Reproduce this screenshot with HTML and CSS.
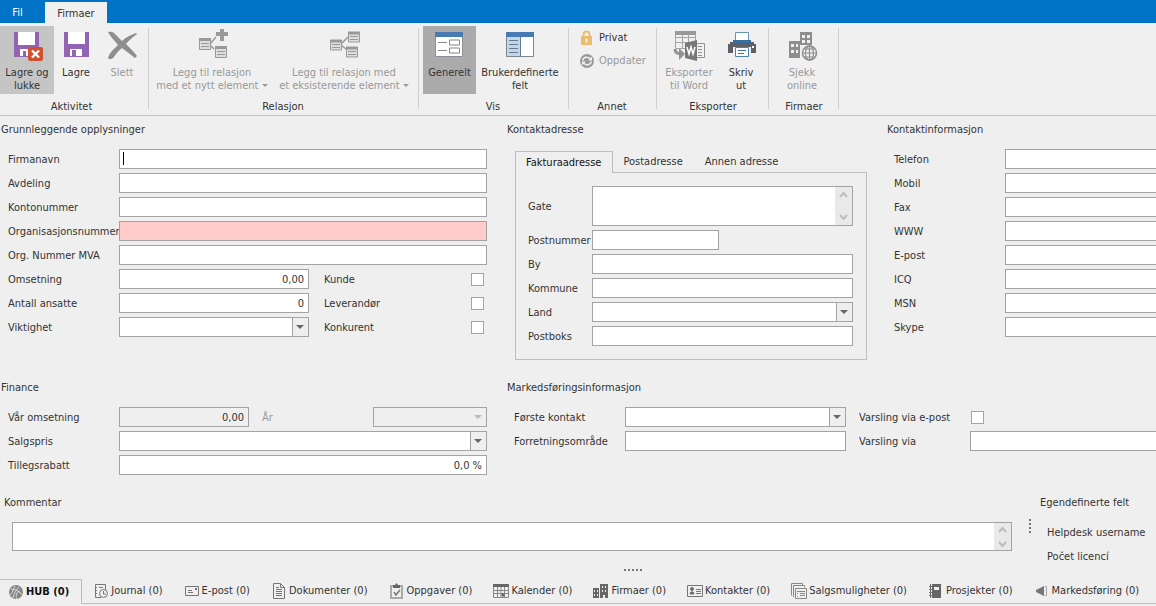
FILE: index.html
```html
<!DOCTYPE html>
<html lang="no">
<head>
<meta charset="utf-8">
<title>Firmaer</title>
<link rel="stylesheet" href="styles.css">
</head>
<body>
<header>
  <nav class="menubar">
    <button class="menu-tab" type="button">Fil</button>
    <button class="menu-tab menu-tab-active" type="button">Firmaer</button>
  </nav>
  <div class="ribbon">
    <section class="group group-activity">
      <div class="tools">
        <button class="tool tool-hover" type="button">
          <svg width="32" height="32" viewBox="0 0 32 32"><path fill="#9464b4" d="M3 3h25v25H3z"/><path fill="#fff" d="M7 3h17v13H7zM9 20h10v7H9z"/><path fill="#9464b4" d="M12 22h3v5h-3z"/><rect x="17" y="18" width="15" height="14" rx="2" fill="#d2502f"/><path stroke="#fff" stroke-width="2.400" d="m21 21.500 7 7m0-7-7 7"/></svg>
          <span>Lagre og<br>lukke</span>
        </button>
        <button class="tool tool-narrow" type="button">
          <svg width="32" height="32" viewBox="0 0 32 32"><path fill="#9464b4" d="M4 3h25v25H4z"/><path fill="#fff" d="M8 3h17v12H8zM10 20h12v7H10z"/><path fill="#9464b4" d="M12 21h4v6h-4z"/></svg>
          <span>Lagre</span>
        </button>
        <button class="tool tool-wide-icon" type="button" disabled>
          <svg width="32" height="32" viewBox="0 0 32 32"><path fill="#8e8e8e" d="M2 3c3-1 6 0 8 3l6 6C20 8 25 6 30 4l1 1c-4 3-8 6-11 10 4 4 8 8 11 12l-2 2c-4-3-9-7-13-10-4 3-6 6-8 9-2 3-6 2-6 1 2-6 6-9 10-13C8 11 4 7 2 3z"/></svg>
          <span>Slett</span>
        </button>
      </div>
      <h2>Aktivitet</h2>
    </section>
    <section class="group group-relation">
      <div class="tools">
        <button class="tool tool-relation" type="button" disabled>
          <svg width="32" height="32" viewBox="0 0 32 32" fill="#dedede" stroke="#999"><path fill="none" stroke-width="1.500" d="M14 15l6-7m-6 8 4 4"/><path d="M3.500 10.500h11v10h-11zM19.500 18.500h11v10h-11z"/><path stroke-width="3" d="M3 10.500h12M19 18.500h12"/><path d="M5 14.500h8m-8 3h8m8 5h8m-8 3h8"/><path stroke-width="4" d="M20 5h12M26 0v12"/></svg>
          <span>Legg til relasjon<br>med et nytt element <i class="drop"></i></span>
        </button>
        <button class="tool tool-relation" type="button" disabled>
          <svg width="32" height="32" viewBox="0 0 32 32" fill="#dedede" stroke="#999"><path fill="none" stroke-width="1.500" d="M13 15l7-7m-7 8 5 4"/><path d="M2.500 12h11v9h-11zM20.500 4h11v9h-11zM18.500 19h11v9h-11z"/><path stroke-width="3" d="M2 12h12M20 4h12M18 19h12"/><path d="M4 15.500h8m-8 3h8m10-11h8m-8 3h8m-10 12h8m-8 3h8"/></svg>
          <span>Legg til relasjon med<br>et eksisterende element <i class="drop"></i></span>
        </button>
      </div>
      <h2>Relasjon</h2>
    </section>
    <section class="group group-view">
      <div class="tools">
        <button class="tool tool-selected" type="button">
          <svg width="32" height="32" viewBox="0 0 32 32"><path fill="#fff" stroke="#8a8f98" d="M1.500 3.500h27v24h-27z"/><path fill="#4a7ab3" d="M1 3h28v5H1z"/><path fill="none" stroke="#858585" d="M4 13.500h9m2.500-2.500h10v5h-10zM4 21.500h9m2.500-2.500h10v5h-10z"/></svg>
          <span>Generelt</span>
        </button>
        <button class="tool tool-custom" type="button">
          <svg width="32" height="32" viewBox="0 0 32 32"><path fill="#fff" stroke="#7d858f" d="M2.500 3.500h27v24h-27z"/><path fill="#c3d7eb" d="M3 8h14v19H3z"/><path fill="#4a7ab3" d="M2 3h28v5H2z"/><path fill="none" stroke="#667b91" d="M5 11.500h9m-9 4h9m-9 4h9m-9 4h9M16.500 8v20"/></svg>
          <span>Brukerdefinerte<br>felt</span>
        </button>
      </div>
      <h2>Vis</h2>
    </section>
    <section class="group group-other">
      <div class="tools tools-stacked">
        <button class="tool-small" type="button">
          <svg width="16" height="16" viewBox="0 0 16 16"><path fill="none" stroke="#e9bf78" stroke-width="2" d="M4.500 8V4.500a3 3 0 0 1 6 0V8"/><path fill="#edbd6d" d="M2 6h11v9H2z"/><path stroke="#fff" stroke-width="1.500" d="M7.500 8.500v4"/></svg>
          Privat
        </button>
        <button class="tool-small" type="button" disabled>
          <svg width="16" height="16" viewBox="0 0 16 16"><circle cx="8" cy="8" r="7" fill="#999"/><path fill="none" stroke="#f0f0f0" stroke-width="1.500" d="M3.500 7.500C5 3.500 9 3.500 11.500 6M12.500 8.500c-1.500 4-5.500 4-8 1.500"/><path fill="#f0f0f0" d="M13 3.500v4H9zM3 12.500v-4h4z"/></svg>
          Oppdater
        </button>
      </div>
      <h2>Annet</h2>
    </section>
    <section class="group group-export">
      <div class="tools">
        <button class="tool tool-word" type="button" disabled>
          <svg width="32" height="32" viewBox="0 0 32 32"><path fill="none" stroke="#a5a5a5" d="M2.500 3.500h20v16h-20zM2 8.500h20m-20 5h20M9.500 6v14m6-14v14"/><path fill="#999" d="M2 2h21v4H2z"/><path fill="#f0f0f0" stroke="#929292" d="M20.500 14.500h11v14h-11z"/><path stroke="#929292" d="M25 17.500h4m-4 3h4m-4 3h4m-4 3h4"/><path fill="#777" d="m12 14 12-3v21l-12-3z"/><path fill="none" stroke="#fff" stroke-width="1.500" d="m14 18 2 7 2-7 2 7 2-7"/><path fill="none" stroke="#929292" stroke-width="3" d="M2 20c0 4 3 5 7 5"/><path fill="#929292" d="m6 19 6 6-6 6z"/></svg>
          <span>Eksporter<br>til Word</span>
        </button>
        <button class="tool tool-print" type="button">
          <svg width="32" height="32" viewBox="0 0 32 32"><path fill="#5d6064" d="M3 13h28v11H3z"/><path fill="#f0f0f0" d="M3 13h2v2H3zm26 0h2v2h-2z"/><path fill="#fff" stroke="#6692ba" d="M10.500 3.500h13v9h-13z"/><path fill="#376e9e" d="M8 11h18v3H8z"/><path fill="#f0f0f0" d="M8 18h18v6H8z"/><path fill="#fff" stroke="#4c83b5" d="M10.500 18.500h13v9h-13z"/><path stroke="#376e9e" d="M13 21.500h8m-8 3h6"/><path fill="#fff" d="M27 17h2v2h-2z"/></svg>
          <span>Skriv<br>ut</span>
        </button>
      </div>
      <h2>Eksporter</h2>
    </section>
    <section class="group group-companies">
      <div class="tools">
        <button class="tool tool-check" type="button" disabled>
          <svg width="32" height="32" viewBox="0 0 32 32"><path fill="#8e8e8e" d="M3 12h11v17H3zM14 3h12v13H14z"/><path fill="#f0f0f0" d="M5 15h3v3H5zm5 0h2v3h-2zm-5 6h3v3H5zm5 0h2v3h-2zM16 6h3v3h-3zm5 0h3v3h-3zm-5 5h3v3h-3zm5 0h3v3h-3z"/><circle cx="23.500" cy="24" r="7" fill="#f0f0f0" stroke="#8e8e8e" stroke-width="1.500"/><path fill="none" stroke="#8e8e8e" stroke-width="1.200" d="M23.500 17v14M16.500 24h14M18 20h11M18 28h11"/><ellipse cx="23.500" cy="24" rx="4" ry="7" fill="none" stroke="#8e8e8e" stroke-width="1.200"/></svg>
          <span>Sjekk<br>online</span>
        </button>
      </div>
      <h2>Firmaer</h2>
    </section>
  </div>
</header>

<main>
  <div class="sections">
    <section class="section">
      <h3>Grunnleggende opplysninger</h3>
      <div class="fields">
        <div class="row"><label for="firmanavn">Firmanavn</label><input class="field focused" id="firmanavn" type="text"></div>
        <div class="row"><label for="avdeling">Avdeling</label><input class="field" id="avdeling" type="text"></div>
        <div class="row"><label for="konto">Kontonummer</label><input class="field" id="konto" type="text"></div>
        <div class="row"><label for="orgnr">Organisasjonsnummer</label><input class="field required" id="orgnr" type="text"></div>
        <div class="row"><label for="mva">Org. Nummer MVA</label><input class="field" id="mva" type="text"></div>
        <div class="row split"><label for="omsetning">Omsetning</label><input class="field number" id="omsetning" type="text" value="0,00"><label for="kunde">Kunde</label><input class="check" id="kunde" type="checkbox"></div>
        <div class="row split"><label for="ansatte">Antall ansatte</label><input class="field number" id="ansatte" type="text" value="0"><label for="lev">Leverandør</label><input class="check" id="lev" type="checkbox"></div>
        <div class="row split"><label for="viktighet">Viktighet</label><span class="combo"><select class="field" id="viktighet"><option></option></select></span><label for="konkurent">Konkurent</label><input class="check" id="konkurent" type="checkbox"></div>
      </div>
    </section>

    <section class="section">
      <h3>Kontaktadresse</h3>
      <div class="address">
        <div class="address-tabs">
          <button class="address-tab address-tab-active" type="button">Fakturaadresse</button>
          <button class="address-tab" type="button">Postadresse</button>
          <button class="address-tab" type="button">Annen adresse</button>
        </div>
        <div class="address-panel">
          <div class="row"><label for="gate">Gate</label>
            <div class="memo memo-street"><textarea id="gate"></textarea>
              <div class="scroller"><svg width="9" height="6" viewBox="0 0 9 6"><path d="m1 5 3.500-4L8 5"/></svg><svg width="9" height="6" viewBox="0 0 9 6"><path d="m1 1 3.500 4L8 1"/></svg></div></div>
          </div>
          <div class="row"><label for="postnr">Postnummer</label><input class="field postcode" id="postnr" type="text"></div>
          <div class="row"><label for="by">By</label><input class="field" id="by" type="text"></div>
          <div class="row"><label for="kommune">Kommune</label><input class="field" id="kommune" type="text"></div>
          <div class="row"><label for="land">Land</label><span class="combo"><select class="field" id="land"><option></option></select></span></div>
          <div class="row"><label for="postboks">Postboks</label><input class="field" id="postboks" type="text"></div>
        </div>
      </div>
    </section>

    <section class="section">
      <h3>Kontaktinformasjon</h3>
      <div class="fields fields-edge">
        <div class="row"><label for="telefon">Telefon</label><input class="field" id="telefon" type="text"></div>
        <div class="row"><label for="mobil">Mobil</label><input class="field" id="mobil" type="text"></div>
        <div class="row"><label for="fax">Fax</label><input class="field" id="fax" type="text"></div>
        <div class="row"><label for="www">WWW</label><input class="field" id="www" type="text"></div>
        <div class="row"><label for="epost">E-post</label><input class="field" id="epost" type="text"></div>
        <div class="row"><label for="icq">ICQ</label><input class="field" id="icq" type="text"></div>
        <div class="row"><label for="msn">MSN</label><input class="field" id="msn" type="text"></div>
        <div class="row"><label for="skype">Skype</label><input class="field" id="skype" type="text"></div>
      </div>
    </section>

    <section class="section">
      <h3>Finance</h3>
      <div class="fields">
        <div class="row year"><label for="vaar">Vår omsetning</label><input class="field number readonly" id="vaar" type="text" value="0,00" readonly><label class="muted" for="aar">År</label><span class="combo combo-disabled"><select class="field" id="aar" disabled><option></option></select></span></div>
        <div class="row"><label for="salgspris">Salgspris</label><span class="combo"><select class="field" id="salgspris"><option></option></select></span></div>
        <div class="row"><label for="rabatt">Tillegsrabatt</label><input class="field number" id="rabatt" type="text" value="0,0 %"></div>
      </div>
    </section>

    <section class="section section-wide">
      <h3>Markedsføringsinformasjon</h3>
      <div class="marketing">
        <label for="kontakt">Første kontakt</label><span class="combo"><select class="field" id="kontakt"><option></option></select></span>
        <label class="second" for="varsling-epost">Varsling via e-post</label><input class="check" id="varsling-epost" type="checkbox">
        <label for="omraade">Forretningsområde</label><input class="field" id="omraade" type="text">
        <label class="second" for="varsling">Varsling via</label><input class="field field-open" id="varsling" type="text">
      </div>
    </section>
  </div>

  <div class="lower">
    <section class="comment">
      <h3><label for="kommentar">Kommentar</label></h3>
      <div class="memo memo-comment"><textarea id="kommentar"></textarea>
        <div class="scroller"><svg width="9" height="6" viewBox="0 0 9 6"><path d="m1 5 3.500-4L8 5"/></svg><svg width="9" height="6" viewBox="0 0 9 6"><path d="m1 1 3.500 4L8 1"/></svg></div></div>
    </section>
    <div class="grip-vertical"></div>
    <section class="custom">
      <h3>Egendefinerte felt</h3>
      <p>Helpdesk username</p>
      <p>Počet licencí</p>
    </section>
  </div>
  <div class="grip"></div>
</main>

<nav class="bottom-tabs">
  <button class="bottom-tab bottom-tab-active" type="button"><svg width="16" height="16" viewBox="0 0 16 16"><circle cx="8" cy="8" r="7" fill="#858585"/><path fill="none" stroke="#ddd" d="M2 11c3-2 3-6 5-9m-2 12c1-5 3-8 6-11M9 15c-2-3 0-8 3-8M8 6l7 5M3 5l5 1"/></svg>HUB (0)</button>
  <button class="bottom-tab" type="button"><svg width="16" height="16" viewBox="0 0 16 16" fill="none" stroke="#777"><path d="M8 14.500H2.500v-13h10V7M2 4.500h2m-2 3h2m-2 3h2M6 4.500h4"/><circle cx="10.500" cy="10.500" r="4" fill="#efefef"/><path d="M10.500 8v3H13"/></svg>Journal (0)</button>
  <button class="bottom-tab" type="button"><svg width="16" height="16" viewBox="0 0 16 16" fill="none" stroke="#777"><path d="M1.500 3.500h13v9h-13zM4 7.500h4m-4 2h5"/><path fill="#777" stroke="none" d="M11 5h2v2h-2z"/></svg>E-post (0)</button>
  <button class="bottom-tab" type="button"><svg width="16" height="16" viewBox="0 0 16 16" fill="none" stroke="#777"><path d="M2.500.5h7l4 4v11h-11zM9.500.5v4h4M5 4.500h3m-3 2h6m-6 2h6m-6 2h6m-6 2h6"/></svg>Dokumenter (0)</button>
  <button class="bottom-tab" type="button"><svg width="16" height="16" viewBox="0 0 16 16" fill="none"><path stroke="#aaa" stroke-width="2" d="M2 3h11v12H2z"/><path fill="#666" d="M4 2h2l1.500-2L9 2h2v3H4z"/><path stroke="#777" stroke-width="1.500" d="m5 9 2 3 4-5"/></svg>Oppgaver (0)</button>
  <button class="bottom-tab" type="button"><svg width="16" height="16" viewBox="0 0 16 16" fill="none" stroke="#888"><path d="M.5 1.500h15v13H.5zM.5 7.500h15m-15 3h15M4.500 4v11m3.500-11v11m3.500-11v11"/><path fill="#666" stroke="#666" d="M.5 1.500h15v2H.5zM9 11h2v2H9z"/></svg>Kalender (0)</button>
  <button class="bottom-tab" type="button"><svg width="16" height="16" viewBox="0 0 16 16"><path fill="#666" d="M0 5h6v10H0zM7 1h8v14H7z"/><path fill="#efefef" d="M1 7h1v2H1zm3 0h1v2H4zm-3 4h1v2H1zm3 0h1v2H4zm5-8h1v2H9zm3 0h1v2h-1zM9 7h1v2H9zm3 0h1v2h-1zm-2 5h2v3h-2z"/></svg>Firmaer (0)</button>
  <button class="bottom-tab" type="button"><svg width="16" height="16" viewBox="0 0 16 16" fill="none" stroke="#777"><path d="M.5 2.500h15v11H.5zM9 6.500h5m-5 2h5m-5 2h5"/><circle cx="5" cy="6" r="1.500" fill="#666"/><path fill="#666" d="M3 11c0-3 4-3 4 0z"/></svg>Kontakter (0)</button>
  <button class="bottom-tab" type="button"><svg width="16" height="16" viewBox="0 0 16 16" fill="none" stroke="#888"><path d="M.5 12.500V.5h11v2M2.500 14V2.500h11v2"/><path fill="#efefef" d="M4.500 5.500h11v10h-11z"/><path d="M6 8.500h8m-5 2h5m-5 2h5m-8-2h1m-1 3h1"/></svg>Salgsmuligheter (0)</button>
  <button class="bottom-tab" type="button"><svg width="16" height="16" viewBox="0 0 16 16"><path fill="#666" d="M2 1h11v14H2z"/><path stroke="#efefef" d="M3.500 1v14"/><path fill="#efefef" d="M6 4h5v3H6z"/><path stroke="#777" d="M1 3.500h3m-3 3h3m-3 3h3m-3 3h3"/></svg>Prosjekter (0)</button>
  <button class="bottom-tab" type="button"><svg width="16" height="16" viewBox="0 0 16 16"><path fill="#777" d="m2 7 8-4v10L2 9z"/><path fill="none" stroke="#aaa" d="M10.500 3.500h2v9h-2"/></svg>Markedsføring (0)</button>
  <span class="bottom-fill"></span>
</nav>
</body>
</html>
```
FILE: styles.css
```css
* {
  box-sizing: border-box;
}

body {
  margin: 0;
  background: #efefef;
  color: #333;
  font: 11px/16px "DejaVu Sans Condensed", Tahoma, sans-serif;
  overflow-x: hidden;
}

button,
input,
select,
textarea {
  font: inherit;
  color: inherit;
  margin: 0;
}

button {
  border: 0;
  background: none;
  padding: 0;
}

h2,
h3,
p {
  margin: 0;
  font: inherit;
}

/* Menu bar */
.menubar {
  display: flex;
  height: 23px;
  padding-top: 2px;
  background: #0173c7;
}

.menu-tab {
  padding: 2px 12px 0;
  color: #fff;
}

.menu-tab:first-child {
  width: 45px;
  padding: 0 10px 0 0;
}

.menu-tab-active {
  width: 62px;
  background: #f0f0f0;
  color: #333;
}

/* Ribbon */
.ribbon {
  display: flex;
  height: 93px;
  padding-top: 3px;
  background: #f0f0f0;
  border-bottom: 1px solid #c6c6c6;
}

.group {
  display: flex;
  flex-direction: column;
  position: relative;
}

.group::after {
  content: "";
  position: absolute;
  right: 0;
  top: 2px;
  bottom: 6px;
  width: 1px;
  background: #cfcfcf;
}

.group h2 {
  padding-top: 5px;
  text-align: center;
}

.group-activity { width: 149px; }
.group-relation { width: 270px; }
.group-view { width: 150px; }
.group-other { width: 88px; }
.group-export { width: 112px; }
.group-companies { width: 70px; }

.group-activity h2 { padding-right: 6px; }
.group-relation h2, .group-view h2, .group-other h2 { padding-right: 2px; }

.tools {
  display: flex;
  height: 68px;
}

.tool {
  display: flex;
  flex-direction: column;
  align-items: center;
  gap: 5px;
  padding-top: 3px;
  line-height: 13px;
  white-space: nowrap;
}

.tool:disabled,
.tool-small:disabled,
.muted {
  color: #999;
}

.tool-hover {
  width: 54px;
  background: #c5c5c5;
}

.tool-narrow { width: 44px; }
.tool-wide-icon { width: 48px; }
.tool-relation { width: 126px; }
.tool-relation + .tool-relation { width: 138px; }
.tool-custom { width: 88px; }
.tool-word { width: 60px; }
.tool-print { width: 44px; }
.tool-check { width: 66px; }

.tool-selected {
  width: 53px;
  margin-left: 4px;
  background: #ababab;
}

.group-export .tools {
  padding-left: 2px;
}

.drop {
  display: inline-block;
  vertical-align: 2px;
  border: 3px solid transparent;
  border-top-color: #999;
  border-bottom: 0;
}

.tools-stacked {
  flex-direction: column;
  align-items: flex-start;
  gap: 7px;
  padding: 4px 0 0 10px;
}

.tool-small {
  display: flex;
  gap: 4px;
}

/* Form sections */
.sections {
  display: grid;
  grid-template-columns: minmax(0, 487fr) minmax(0, 360fr) minmax(0, 269fr);
  gap: 20px;
  padding-top: 6px;
}

.section-wide {
  grid-column: span 2;
}

.section:nth-child(3n + 1) h3 {
  padding-left: 1px;
}

.fields {
  display: flex;
  flex-direction: column;
  gap: 4px;
  padding: 11px 0 0 8px;
}

.fields-edge {
  padding-left: 7px;
}

.row {
  display: flex;
  align-items: center;
}

.row > label,
.marketing > label {
  padding-top: 2px;
  white-space: nowrap;
}

.row > label {
  flex: 0 0 111px;
  min-width: 0;
}

.field {
  flex: 1;
  display: block;
  width: 100%;
  min-width: 0;
  height: 20px;
  padding: 1px 4px 0;
  background: #fff;
  border: 1px solid #a3a3a3;
  border-radius: 0;
  outline: 0;
}

.focused {
  background: linear-gradient(#000, #000) 3px 2px / 1px 13px no-repeat #fff;
}

.required {
  background: #ffcbcb;
}

.number {
  text-align: right;
}

.readonly,
.field:disabled {
  background: #efefef;
  opacity: 1;
}

.fields-edge .field,
.field-open {
  border-right: 0;
}

.split,
.year {
  display: grid;
  grid-template-columns: 111px minmax(0, 190fr) minmax(0, 162fr) 16px;
}

.year {
  grid-template-columns: 111px minmax(0, 130fr) minmax(0, 124fr) minmax(0, 114fr);
}

.split > label:nth-child(3) {
  padding-left: 15px;
}

.year > label:nth-child(3) {
  padding-left: 13px;
}

.check {
  appearance: none;
  width: 13px;
  height: 13px;
  background: #fff;
  border: 1px solid #a3a3a3;
}

.combo {
  flex: 1;
  position: relative;
  min-width: 0;
}

.combo select {
  appearance: none;
  background: linear-gradient(90deg, #a3a3a3 1px, #efefef 1px) right / 16px 100% no-repeat #fff;
}

.combo::after {
  content: "";
  position: absolute;
  right: 5px;
  top: 8px;
  border: 4px solid transparent;
  border-top-color: #666;
  border-bottom: 0;
}

.combo-disabled select {
  background: linear-gradient(90deg, #ccc 1px, #efefef 1px) right / 16px 100% no-repeat #efefef;
}

.combo-disabled::after {
  border-top-color: #bbb;
}

/* Address tabs */
.address {
  padding: 13px 0 0 8px;
}

.address-tabs {
  display: flex;
}

.address-tab {
  height: 21px;
  padding: 1px 12px 0 10px;
}

.address-tab-active {
  position: relative;
  margin-bottom: -1px;
  height: 22px;
  padding: 0 11px 0 10px;
  color: #111;
  background: #efefef;
  border: 1px solid #bdbdbd;
  border-bottom: 0;
}

.address-panel {
  display: flex;
  flex-direction: column;
  gap: 4px;
  padding: 13px 13px 13px 12px;
  border: 1px solid #bdbdbd;
}

.address-panel .row > label {
  flex-basis: 64px;
}

.row > .postcode {
  flex: 0 1 127px;
}

.memo {
  display: flex;
  flex: 1;
  background: #fff;
  border: 1px solid #a3a3a3;
}

.memo textarea {
  flex: 1;
  min-width: 0;
  padding: 2px;
  border: 0;
  resize: none;
  outline: 0;
  overflow: hidden;
}

.memo-street { height: 40px; }
.memo-comment { height: 29px; }

.scroller {
  display: flex;
  flex-direction: column;
  justify-content: space-between;
  align-items: center;
  width: 17px;
  padding: 5px 0;
  background: #e9e9e9;
}

.scroller path {
  fill: none;
  stroke: #bdbdbd;
  stroke-width: 2;
}

.marketing {
  display: grid;
  grid-template-columns: 111px minmax(0, 221fr) 124px minmax(0, 186fr);
  align-items: center;
  gap: 4px 0;
  padding: 11px 0 0 7px;
}

.second {
  padding-left: 13px;
}

.marketing .check {
  margin-left: 1px;
}

/* Comment and custom fields */
.lower {
  display: flex;
  padding-top: 20px;
}

.comment {
  flex: 1;
  padding-left: 4px;
}

.memo-comment {
  margin: 11px 0 0 8px;
}

.memo-comment .scroller {
  padding: 4px 0 3px;
}

.grip-vertical {
  width: 2px;
  height: 16px;
  margin: 24px 9px 0 17px;
  background: repeating-linear-gradient(#777 0 2px, transparent 2px 4px);
}

.custom {
  width: 116px;
  white-space: nowrap;
}

.custom p {
  padding-left: 7px;
}

.custom p:nth-child(2) {
  margin: 14px 0 8px;
}

.grip {
  width: 18px;
  height: 2px;
  margin: 4px 0 8px 54%;
  background: repeating-linear-gradient(90deg, #777 0 2px, transparent 2px 4px);
}

/* Bottom tabs */
.bottom-tabs {
  display: flex;
  height: 25px;
}

.bottom-tab {
  display: flex;
  align-items: center;
  gap: 2px;
  padding: 0 10px 0 11px;
  white-space: nowrap;
  border-bottom: 1px solid #bdbdbd;
}

.bottom-tab svg {
  flex: none;
}

.bottom-tab-active {
  padding: 0 12px 0 8px;
  color: #111;
  font-weight: bold;
  border: 1px solid #bdbdbd;
  border-width: 1px 1px 0 0;
}

.bottom-fill {
  flex: 1;
  border-bottom: 1px solid #bdbdbd;
}
```
